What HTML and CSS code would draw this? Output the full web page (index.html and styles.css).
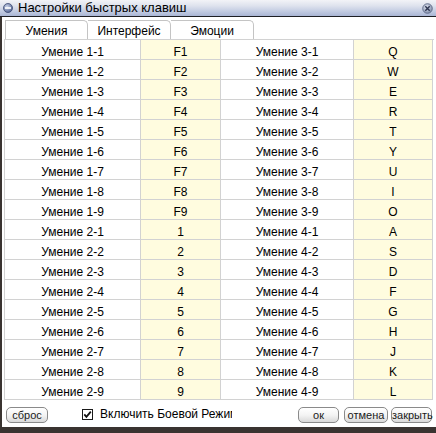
FILE: index.html
```html
<!DOCTYPE html>
<html lang="ru">
<head>
<meta charset="utf-8">
<title>Настройки быстрых клавиш</title>
<link rel="stylesheet" href="styles.css">
</head>
<body>
<div class="window">
  <div class="titlebar">
    <svg class="ticon" width="10" height="10" viewBox="0 0 10 10">
      <defs><radialGradient id="g1" cx="0.4" cy="0.35" r="0.7"><stop offset="0" stop-color="#c9d3ea"/><stop offset="1" stop-color="#4e5f8e"/></radialGradient></defs>
      <circle cx="5" cy="5" r="4.5" fill="url(#g1)" stroke="#3d4a72" stroke-width="0.8"/>
      <rect x="2" y="4.2" width="6" height="1.6" fill="#fff"/>
    </svg>
    <span class="title">Настройки быстрых клавиш</span>
    <svg class="close" width="11" height="11" viewBox="0 0 11 11">
      <defs><radialGradient id="g2" cx="0.4" cy="0.35" r="0.7"><stop offset="0" stop-color="#dfe4f0"/><stop offset="1" stop-color="#7d8aa8"/></radialGradient></defs>
      <circle cx="5.5" cy="5.5" r="4.8" fill="url(#g2)" stroke="#56617e" stroke-width="0.8"/>
      <path d="M3.3 3.3 L7.7 7.7 M7.7 3.3 L3.3 7.7" stroke="#2d3550" stroke-width="1.4"/>
    </svg>
  </div>
  <div class="body">
    <div class="tabs">
      <div class="tab active">Умения</div>
      <div class="tab">Интерфейс</div>
      <div class="tab">Эмоции</div>
    </div>
    <div class="grid">
      <div class="cell">Умение 1-1</div><div class="cell key">F1</div><div class="cell">Умение 3-1</div><div class="cell key">Q</div>
      <div class="cell">Умение 1-2</div><div class="cell key">F2</div><div class="cell">Умение 3-2</div><div class="cell key">W</div>
      <div class="cell">Умение 1-3</div><div class="cell key">F3</div><div class="cell">Умение 3-3</div><div class="cell key">E</div>
      <div class="cell">Умение 1-4</div><div class="cell key">F4</div><div class="cell">Умение 3-4</div><div class="cell key">R</div>
      <div class="cell">Умение 1-5</div><div class="cell key">F5</div><div class="cell">Умение 3-5</div><div class="cell key">T</div>
      <div class="cell">Умение 1-6</div><div class="cell key">F6</div><div class="cell">Умение 3-6</div><div class="cell key">Y</div>
      <div class="cell">Умение 1-7</div><div class="cell key">F7</div><div class="cell">Умение 3-7</div><div class="cell key">U</div>
      <div class="cell">Умение 1-8</div><div class="cell key">F8</div><div class="cell">Умение 3-8</div><div class="cell key">I</div>
      <div class="cell">Умение 1-9</div><div class="cell key">F9</div><div class="cell">Умение 3-9</div><div class="cell key">O</div>
      <div class="cell">Умение 2-1</div><div class="cell key">1</div><div class="cell">Умение 4-1</div><div class="cell key">A</div>
      <div class="cell">Умение 2-2</div><div class="cell key">2</div><div class="cell">Умение 4-2</div><div class="cell key">S</div>
      <div class="cell">Умение 2-3</div><div class="cell key">3</div><div class="cell">Умение 4-3</div><div class="cell key">D</div>
      <div class="cell">Умение 2-4</div><div class="cell key">4</div><div class="cell">Умение 4-4</div><div class="cell key">F</div>
      <div class="cell">Умение 2-5</div><div class="cell key">5</div><div class="cell">Умение 4-5</div><div class="cell key">G</div>
      <div class="cell">Умение 2-6</div><div class="cell key">6</div><div class="cell">Умение 4-6</div><div class="cell key">H</div>
      <div class="cell">Умение 2-7</div><div class="cell key">7</div><div class="cell">Умение 4-7</div><div class="cell key">J</div>
      <div class="cell">Умение 2-8</div><div class="cell key">8</div><div class="cell">Умение 4-8</div><div class="cell key">K</div>
      <div class="cell">Умение 2-9</div><div class="cell key">9</div><div class="cell">Умение 4-9</div><div class="cell key">L</div>
    </div>
    <div class="footer">
      <button class="btn reset">сброс</button>
      <div class="check">
        <svg class="box" width="11" height="11" viewBox="0 0 11 11">
          <rect x="0.5" y="0.5" width="10" height="10" fill="#fff" stroke="#1a1a1a"/>
          <path d="M2.3 5.4 L4.4 7.8 L8.8 2.6" fill="none" stroke="#111" stroke-width="1.8"/>
        </svg>
        <span class="label">Включить Боевой Режим</span>
      </div>
      <button class="btn ok">ок</button>
      <button class="btn cancel">отмена</button>
      <button class="btn closebtn">закрыть</button>
    </div>
  </div>
</div>
</body>
</html>
```

FILE: styles.css
```css
html, body {
  margin: 0;
  padding: 0;
}
body {
  width: 436px;
  height: 433px;
  overflow: hidden;
  background: #3a3431;
  font-family: "Liberation Sans", Arial, sans-serif;
  font-size: 12px;
  color: #000;
}
.window {
  height: 427px;
  background: #fff;
  display: flex;
  flex-direction: column;
}
.titlebar {
  height: 16px;
  border-bottom: 1px solid #1e1f24;
  background: linear-gradient(#f2f3f7 0%, #dfe3ee 35%, #c3cce2 70%, #a9b5d4 100%);
  display: flex;
  align-items: center;
  padding: 0 3px 0 3px;
}
.ticon {
  flex: none;
}
.title {
  margin-left: 5px;
  font-size: 13px;
  line-height: 16px;
  color: #000;
  flex: 1;
  white-space: nowrap;
}
.close {
  flex: none;
}
.body {
  flex: 1;
  border-left: 2px solid #3a3431;
  display: flex;
  flex-direction: column;
}
.tabs {
  display: flex;
  padding: 3px 0 0 3px;
  height: 19px;
}
.tab {
  width: 83px;
  box-sizing: border-box;
  height: 19px;
  border-top: 1px solid #c4c4c4;
  border-right: 1px solid #c4c4c4;
  border-top-right-radius: 5px;
  text-align: center;
  line-height: 17px;
  padding-top: 2px;
  font-size: 12px;
}
.tab.active {
  border-left: 1px solid #c4c4c4;
}
.grid {
  display: grid;
  grid-template-columns: 136px 80px 133px 79px;
  grid-auto-rows: 20px;
  margin-left: 2px;
  width: 429px;
  border-left: 1px solid #d2d2d2;
  border-top: 1px solid #d2d2d2;
}
.cell {
  box-sizing: border-box;
  border-right: 1px solid #d2d2d2;
  border-bottom: 1px solid #d2d2d2;
  text-align: center;
  padding-top: 6px;
  line-height: 13px;
  font-size: 12px;
  white-space: nowrap;
}
.cell.key {
  background: #fffcdf;
}
.footer {
  display: flex;
  align-items: flex-start;
  padding: 7px 4px 0 4px;
  flex: 1;
}
.btn {
  box-sizing: border-box;
  height: 16px;
  padding: 0;
  margin: 0;
  border: 1px solid #8a8a8a;
  border-radius: 5px;
  background: linear-gradient(#ffffff 0%, #f4f4f4 50%, #d9d9d9 100%);
  font-family: "Liberation Sans", Arial, sans-serif;
  font-size: 11px;
  line-height: 13px;
  color: #1a1a1a;
  text-align: center;
}
.reset {
  width: 42px;
}
.check {
  display: flex;
  align-items: center;
  margin-left: 34px;
  height: 15px;
}
.box {
  flex: none;
}
.label {
  margin-left: 7px;
  width: 132px;
  overflow: hidden;
  white-space: nowrap;
  font-size: 12px;
  line-height: 15px;
}
.ok {
  margin-left: auto;
  width: 41px;
}
.cancel {
  margin-left: 5px;
  width: 44px;
}
.closebtn {
  margin-left: 3px;
  width: 41px;
}
```
